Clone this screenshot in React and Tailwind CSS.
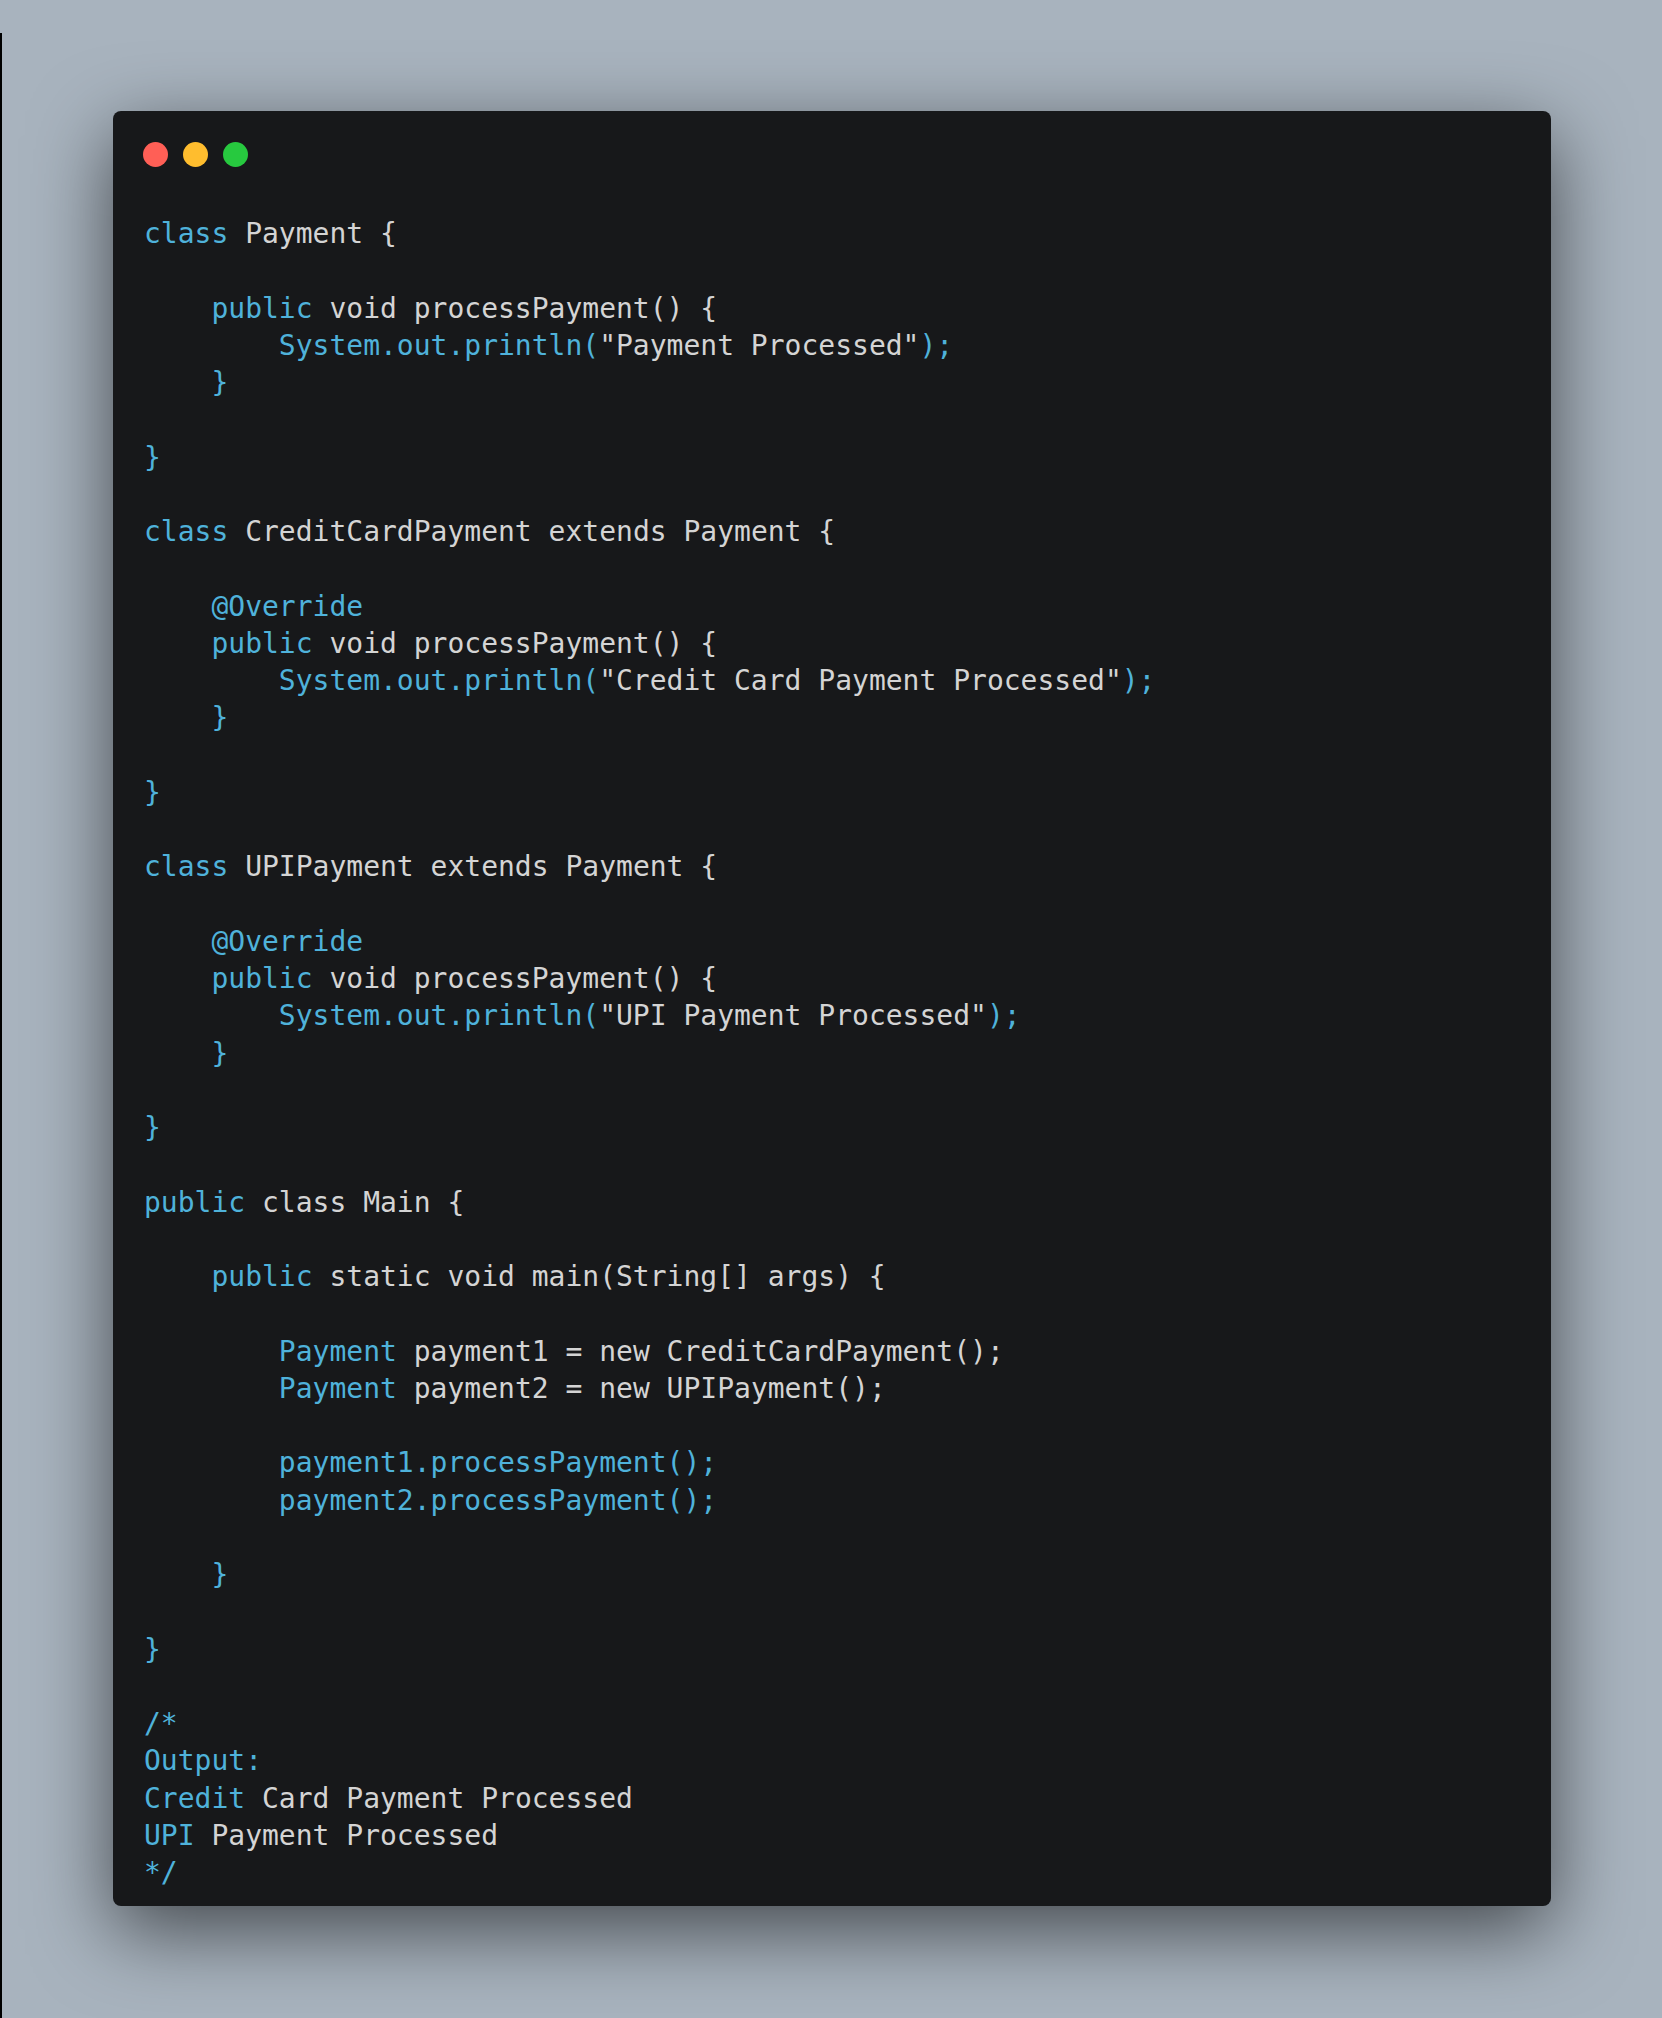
import React from 'react';

// c = cyan token, w = plain token
const lines = [
  [['c', 'class'], ['w', ' Payment {']],
  [],
  [['c', '    public'], ['w', ' void processPayment() {']],
  [['c', '        System.out.println('], ['w', '"Payment Processed"'], ['c', ');']],
  [['c', '    }']],
  [],
  [['c', '}']],
  [],
  [['c', 'class'], ['w', ' CreditCardPayment extends Payment {']],
  [],
  [['c', '    @Override']],
  [['c', '    public'], ['w', ' void processPayment() {']],
  [['c', '        System.out.println('], ['w', '"Credit Card Payment Processed"'], ['c', ');']],
  [['c', '    }']],
  [],
  [['c', '}']],
  [],
  [['c', 'class'], ['w', ' UPIPayment extends Payment {']],
  [],
  [['c', '    @Override']],
  [['c', '    public'], ['w', ' void processPayment() {']],
  [['c', '        System.out.println('], ['w', '"UPI Payment Processed"'], ['c', ');']],
  [['c', '    }']],
  [],
  [['c', '}']],
  [],
  [['c', 'public'], ['w', ' class Main {']],
  [],
  [['c', '    public'], ['w', ' static void main(String[] args) {']],
  [],
  [['c', '        Payment'], ['w', ' payment1 = new CreditCardPayment();']],
  [['c', '        Payment'], ['w', ' payment2 = new UPIPayment();']],
  [],
  [['c', '        payment1.processPayment();']],
  [['c', '        payment2.processPayment();']],
  [],
  [['c', '    }']],
  [],
  [['c', '}']],
  [],
  [['c', '/*']],
  [['c', 'Output:']],
  [['c', 'Credit'], ['w', ' Card Payment Processed']],
  [['c', 'UPI'], ['w', ' Payment Processed']],
  [['c', '*/']],
];

export default function App() {
  return (
    <div className="relative min-h-screen bg-[#a8b3be] pl-[113px] pr-[111px] pt-[111px] pb-[111px]">
      <div className="absolute left-0 top-[33px] bottom-0 w-[2px] bg-black" />
      <div className="rounded-[8px] bg-[#17181a] shadow-[0_24px_80px_rgba(0,0,0,0.6)] pt-[31px] pb-[15px]">
        <div className="flex gap-[15px] pl-[30px]">
          <span className="h-[25px] w-[25px] rounded-full bg-[#ff5f56]" />
          <span className="h-[25px] w-[25px] rounded-full bg-[#ffbd2e]" />
          <span className="h-[25px] w-[25px] rounded-full bg-[#27c93f]" />
        </div>
        <pre className="mt-[48px] pl-[31px] text-[28px] leading-[37.25px] text-[#d4d4d4] font-['DejaVu_Sans_Mono',monospace]">
          {lines.map((segs, i) => (
            <div key={i} className="h-[37.25px] whitespace-pre">
              {segs.map(([k, t], j) => (
                <span key={j} className={k === 'c' ? 'text-[#4fb2da]' : 'text-[#d4d4d4]'}>
                  {t}
                </span>
              ))}
            </div>
          ))}
        </pre>
      </div>
    </div>
  );
}
